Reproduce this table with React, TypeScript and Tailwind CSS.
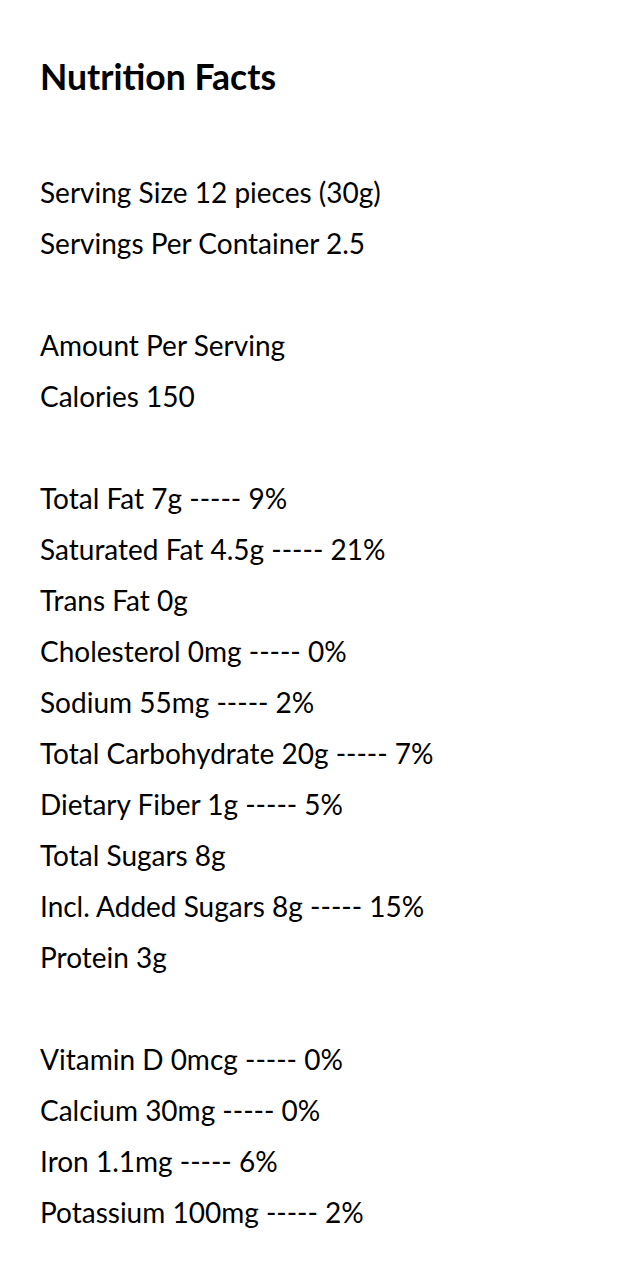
import React from "react";

const groups: string[][] = [
  ["Serving Size 12 pieces (30g)", "Servings Per Container 2.5"],
  ["Amount Per Serving", "Calories 150"],
  [
    "Total Fat 7g ----- 9%",
    "Saturated Fat 4.5g ----- 21%",
    "Trans Fat 0g",
    "Cholesterol 0mg ----- 0%",
    "Sodium 55mg ----- 2%",
    "Total Carbohydrate 20g ----- 7%",
    "Dietary Fiber 1g ----- 5%",
    "Total Sugars 8g",
    "Incl. Added Sugars 8g ----- 15%",
    "Protein 3g",
  ],
  [
    "Vitamin D 0mcg ----- 0%",
    "Calcium 30mg ----- 0%",
    "Iron 1.1mg ----- 6%",
    "Potassium 100mg ----- 2%",
  ],
];

export default function App() {
  return (
    <div className="min-h-screen bg-white text-black px-10 pt-[57px] font-['Lato',sans-serif]">
      <h1 className="text-[35.5px] leading-[40px] font-bold mb-[70px]">Nutrition Facts</h1>
      <div className="flex flex-col gap-[51px]">
        {groups.map((g, i) => (
          <div key={i} className="flex flex-col">
            {g.map((line) => (
              <p key={line} className="text-[28px] leading-[51px]">
                {line}
              </p>
            ))}
          </div>
        ))}
      </div>
    </div>
  );
}
